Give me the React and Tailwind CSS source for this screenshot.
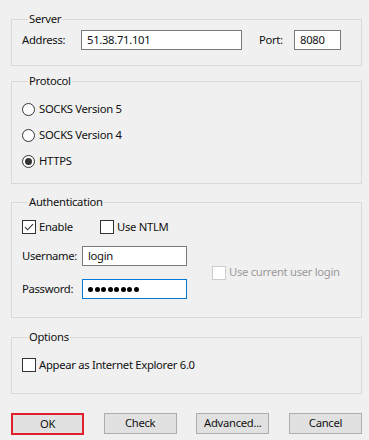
import React from "react";

const font = { fontFamily: '"Noto Sans", "Open Sans", sans-serif' };

function Radio({ checked }) {
  return (
    <span className="w-[13px] h-[13px] rounded-full border border-[#333333] bg-white flex items-center justify-center shrink-0">
      {checked && <span className="w-[7px] h-[7px] rounded-full bg-[#333333]" />}
    </span>
  );
}

function Check({ checked, disabled }) {
  return (
    <span
      className={
        "w-[14px] h-[14px] border bg-white flex items-center justify-center shrink-0 " +
        (disabled ? "border-[#cccccc]" : "border-[#333333]")
      }
    >
      {checked && (
        <svg width="12" height="12" viewBox="0 0 12 12">
          <path d="M2 6.2 L4.6 8.8 L10 3.2" fill="none" stroke="#333333" strokeWidth="1.1" />
        </svg>
      )}
    </span>
  );
}

function Group({ title, className, children }) {
  return (
    <fieldset className={"border border-[#d9d9d9] mx-0 " + className}>
      <legend className="ml-[6px] px-[1px] leading-[14px] text-[11.25px] text-[#111111]">{title}</legend>
      {children}
    </fieldset>
  );
}

export default function App() {
  return (
    <div
      className="w-[369px] h-[440px] bg-[#f0f0f0] pl-[11px] pr-[7px] pt-[12px] text-[11.25px] tracking-[-0.3px] text-[#111111] overflow-hidden"
      style={font}
    >
      <Group title="Server" className="pt-[4px] pb-[15px] pl-[10px]">
        <div className="flex items-center h-[20px]">
          <span className="w-[59px]">Address:</span>
          <div className="w-[161px] h-[20px] border border-[#7a7a7a] bg-white pl-[5px] flex items-center">51.38.71.101</div>
          <span className="ml-[17px] w-[35px]">Port:</span>
          <div className="w-[47px] h-[20px] border border-[#7a7a7a] bg-white pl-[5px] flex items-center">8080</div>
        </div>
      </Group>

      <Group title="Protocol" className="mt-[8px] pt-[8px] pb-[9px] pl-[10px]">
        <div className="flex flex-col">
          <label className="h-[26px] flex items-center gap-[4px]">
            <Radio />
            <span>SOCKS Version 5</span>
          </label>
          <label className="h-[26px] flex items-center gap-[4px]">
            <Radio />
            <span>SOCKS Version 4</span>
          </label>
          <label className="h-[26px] flex items-center gap-[4px]">
            <Radio checked />
            <span>HTTPS</span>
          </label>
        </div>
      </Group>

      <Group title="Authentication" className="mt-[11px] pt-[10px] pb-[18px] pl-[10px]">
        <div className="flex items-center h-[16px]">
          <label className="flex items-center gap-[3px] w-[78px]">
            <Check checked />
            <span>Enable</span>
          </label>
          <label className="flex items-center gap-[3px]">
            <Check />
            <span>Use NTLM</span>
          </label>
        </div>
        <div className="flex items-center mt-[11px]">
          <div className="flex flex-col gap-[13px]">
            <div className="flex items-center h-[20px]">
              <span className="w-[60px]">Username:</span>
              <div className="w-[105px] h-[20px] border border-[#7a7a7a] bg-white pl-[5px] flex items-center">login</div>
            </div>
            <div className="flex items-center h-[20px]">
              <span className="w-[60px]">Password:</span>
              <div className="w-[105px] h-[20px] border border-[#0078d7] bg-white pl-[5px] flex items-center gap-[1.5px]">
                {Array.from({ length: 8 }).map((_, i) => (
                  <span key={i} className="w-[5px] h-[5px] rounded-full bg-black" />
                ))}
              </div>
            </div>
          </div>
          <label className="flex items-center gap-[3px] ml-[25px] text-[#9a9a9a]">
            <Check disabled />
            <span>Use current user login</span>
          </label>
        </div>
      </Group>

      <Group title="Options" className="mt-[12px] pt-[13px] pb-[20px] pl-[10px]">
        <label className="flex items-center gap-[3px] h-[16px]">
          <Check />
          <span>Appear as Internet Explorer 6.0</span>
        </label>
      </Group>

      <div className="flex justify-between mt-[19px]">
        <button className="w-[73px] h-[22px] bg-[#e1e1e1] border-2 border-[#e0202b] text-[11.25px]">OK</button>
        <button className="w-[73px] h-[21px] bg-[#e1e1e1] border border-[#adadad] text-[11.25px]">Check</button>
        <button className="w-[73px] h-[21px] bg-[#e1e1e1] border border-[#adadad] text-[11.25px]">Advanced...</button>
        <button className="w-[73px] h-[21px] bg-[#e1e1e1] border border-[#adadad] text-[11.25px]">Cancel</button>
      </div>
    </div>
  );
}
